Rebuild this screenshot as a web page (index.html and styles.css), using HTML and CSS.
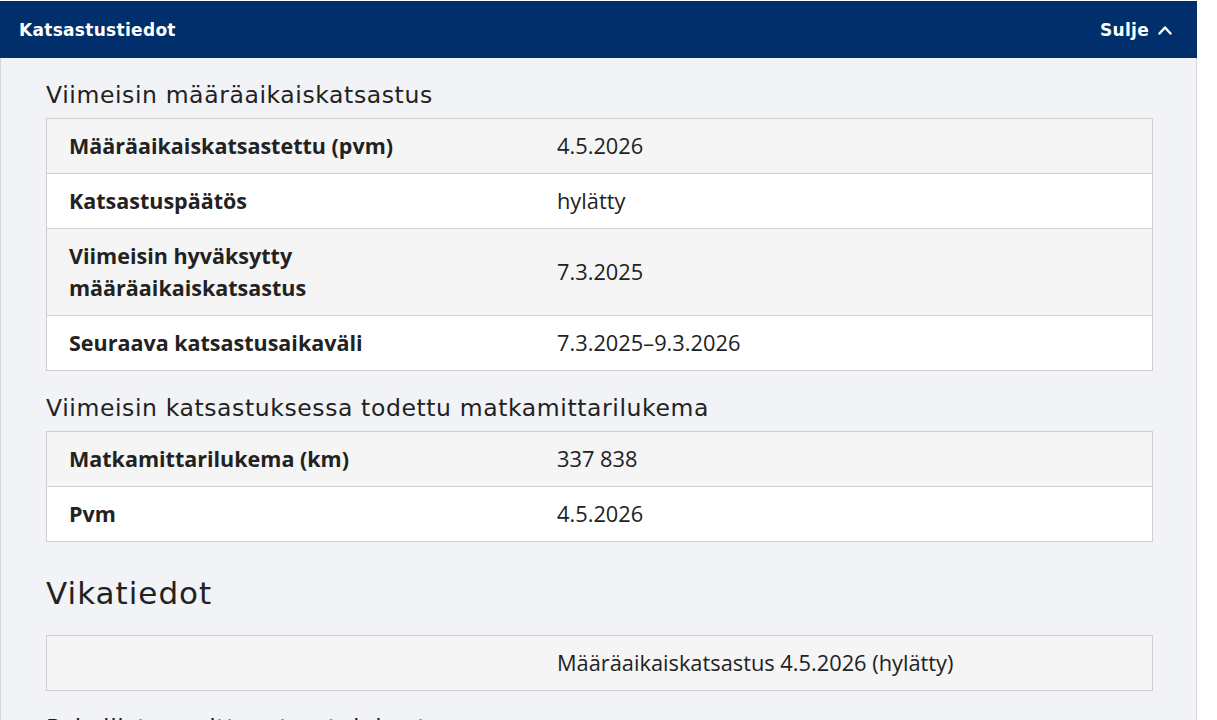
FILE: index.html
```html
<!DOCTYPE html>
<html lang="fi">
  <head>
    <meta charset="UTF-8" />
    <meta name="viewport" content="width=device-width, initial-scale=1.0" />
    <title>Katsastustiedot</title>
    <link rel="stylesheet" href="styles.css">
  </head>
  <body>
    <section class="accordion">
      <div class="accordion-header">
        <h2>Katsastustiedot</h2>
        <button class="toggle" type="button">
          Sulje
          <svg width="14" height="10" viewBox="0 0 14 10">
            <polyline points="1.5,8.5 7,2.5 12.5,8.5" fill="none" stroke="#fff" stroke-width="2.4" stroke-linecap="round" stroke-linejoin="round" />
          </svg>
        </button>
      </div>

      <div class="accordion-body">
        <h3 class="sub-title">Viimeisin määräaikaiskatsastus</h3>
        <div class="info-table">
          <div class="row">
            <div class="label">Määräaikaiskatsastettu (pvm)</div>
            <div class="value">4.5.2026</div>
          </div>
          <div class="row">
            <div class="label">Katsastuspäätös</div>
            <div class="value">hylätty</div>
          </div>
          <div class="row">
            <div class="label">Viimeisin hyväksytty<br />määräaikaiskatsastus</div>
            <div class="value">7.3.2025</div>
          </div>
          <div class="row">
            <div class="label">Seuraava katsastusaikaväli</div>
            <div class="value">7.3.2025–9.3.2026</div>
          </div>
        </div>

        <h3 class="sub-title">Viimeisin katsastuksessa todettu matkamittarilukema</h3>
        <div class="info-table">
          <div class="row">
            <div class="label">Matkamittarilukema (km)</div>
            <div class="value">337 838</div>
          </div>
          <div class="row">
            <div class="label">Pvm</div>
            <div class="value">4.5.2026</div>
          </div>
        </div>

        <h2 class="section-title">Vikatiedot</h2>
        <div class="info-table">
          <div class="row">
            <div class="label"></div>
            <div class="value">Määräaikaiskatsastus 4.5.2026 (hylätty)</div>
          </div>
        </div>

        <h3 class="sub-title">Pakollisten mittausten tulokset</h3>
      </div>
    </section>
  </body>
</html>
```

FILE: styles.css
```css
* {
  box-sizing: border-box;
}

body {
  margin: 0;
  padding-top: 1px;
  background: #fff;
  font-family: "Open Sans", Arial, sans-serif;
  color: #222;
}

.accordion {
  width: 1197px;
}

.accordion-header {
  display: flex;
  align-items: center;
  justify-content: space-between;
  height: 57px;
  padding: 0 25px 0 19px;
  background-color: #002f6c;
  color: #fff;
}

.accordion-header h2 {
  margin: 0;
  font-family: "DejaVu Sans", sans-serif;
  font-size: 17px;
  font-weight: bold;
  letter-spacing: 0.3px;
}

.toggle {
  display: flex;
  align-items: center;
  gap: 9px;
  padding: 0;
  border: none;
  background: none;
  color: #fff;
  font-family: "DejaVu Sans", sans-serif;
  font-size: 17px;
  font-weight: bold;
  letter-spacing: 0.3px;
  cursor: pointer;
}

.accordion-body {
  height: 662px;
  overflow: hidden;
  padding: 0 43px 0 45px;
  background-color: #f2f3f6;
  border-left: 1px solid #d6d7da;
  border-right: 1px solid #d6d7da;
}

.sub-title {
  margin: 22px 0 8px;
  font-family: "DejaVu Sans", sans-serif;
  font-size: 23.5px;
  font-weight: normal;
  letter-spacing: 0.6px;
  line-height: 30px;
  color: #222;
}

.section-title {
  margin: 31px 0 22px;
  font-family: "DejaVu Sans", sans-serif;
  font-size: 31px;
  font-weight: normal;
  letter-spacing: 1px;
  line-height: 40px;
  color: #222;
}

.info-table {
  border: 1px solid #cfcfcf;
}

.row {
  display: grid;
  grid-template-columns: 510px 1fr;
  align-items: center;
  font-size: 21.8px;
  line-height: 32px;
  background: #f5f5f5;
  border-top: 1px solid #cfcfcf;
}

.row:first-child {
  border-top: none;
}

.row:nth-child(even) {
  background: #fff;
}

.label,
.value {
  padding: 11px 0;
}

.label {
  padding-left: 22px;
  font-size: 21.5px;
  font-weight: bold;
}
```
